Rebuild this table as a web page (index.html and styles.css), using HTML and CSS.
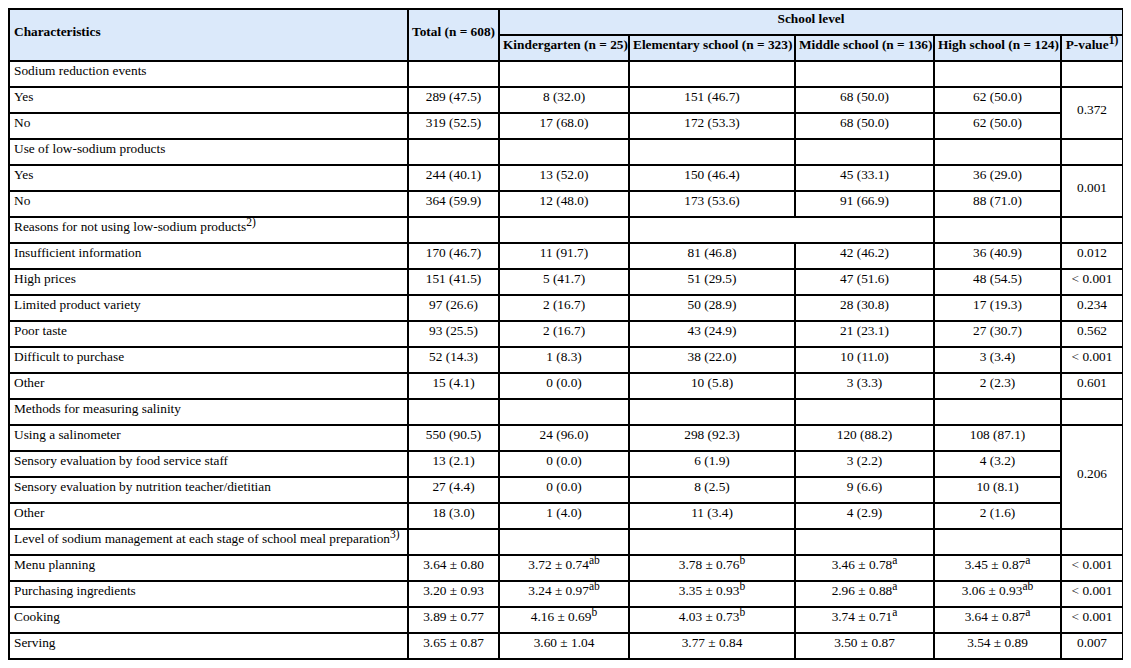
FILE: index.html
```html
<!DOCTYPE html>
<html lang="en">
<head>
<meta charset="utf-8">
<title>Sodium management table</title>
<link rel="stylesheet" href="styles.css">
</head>
<body>
<table class="data">
  <colgroup>
    <col class="c-char">
    <col class="c-total">
    <col class="c-kg">
    <col class="c-el">
    <col class="c-mid">
    <col class="c-high">
    <col class="c-p">
  </colgroup>
  <thead>
    <tr class="hr1">
      <th rowspan="2" class="label">Characteristics</th>
      <th rowspan="2">Total (n = 608)</th>
      <th colspan="6">School level</th>
    </tr>
    <tr class="hr2">
      <th>Kindergarten (n = 25)</th>
      <th>Elementary school (n = 323)</th>
      <th>Middle school (n = 136)</th>
      <th>High school (n = 124)</th>
      <th>P-value<sup>1)</sup></th>
    </tr>
  </thead>
  <tbody>
    <tr><td class="label">Sodium reduction events</td><td></td><td></td><td></td><td></td><td></td><td></td></tr>
    <tr><td class="label">Yes</td><td>289 (47.5)</td><td>8 (32.0)</td><td>151 (46.7)</td><td>68 (50.0)</td><td>62 (50.0)</td><td rowspan="2">0.372</td></tr>
    <tr><td class="label">No</td><td>319 (52.5)</td><td>17 (68.0)</td><td>172 (53.3)</td><td>68 (50.0)</td><td>62 (50.0)</td></tr>
    <tr><td class="label">Use of low-sodium products</td><td></td><td></td><td></td><td></td><td></td><td></td></tr>
    <tr><td class="label">Yes</td><td>244 (40.1)</td><td>13 (52.0)</td><td>150 (46.4)</td><td>45 (33.1)</td><td>36 (29.0)</td><td rowspan="2">0.001</td></tr>
    <tr><td class="label">No</td><td>364 (59.9)</td><td>12 (48.0)</td><td>173 (53.6)</td><td>91 (66.9)</td><td>88 (71.0)</td></tr>
    <tr><td class="label">Reasons for not using low-sodium products<sup>2)</sup></td><td></td><td></td><td colspan="2"></td><td></td><td></td></tr>
    <tr><td class="label">Insufficient information</td><td>170 (46.7)</td><td>11 (91.7)</td><td>81 (46.8)</td><td>42 (46.2)</td><td>36 (40.9)</td><td>0.012</td></tr>
    <tr><td class="label">High prices</td><td>151 (41.5)</td><td>5 (41.7)</td><td>51 (29.5)</td><td>47 (51.6)</td><td>48 (54.5)</td><td>&lt; 0.001</td></tr>
    <tr><td class="label">Limited product variety</td><td>97 (26.6)</td><td>2 (16.7)</td><td>50 (28.9)</td><td>28 (30.8)</td><td>17 (19.3)</td><td>0.234</td></tr>
    <tr><td class="label">Poor taste</td><td>93 (25.5)</td><td>2 (16.7)</td><td>43 (24.9)</td><td>21 (23.1)</td><td>27 (30.7)</td><td>0.562</td></tr>
    <tr><td class="label">Difficult to purchase</td><td>52 (14.3)</td><td>1 (8.3)</td><td>38 (22.0)</td><td>10 (11.0)</td><td>3 (3.4)</td><td>&lt; 0.001</td></tr>
    <tr><td class="label">Other</td><td>15 (4.1)</td><td>0 (0.0)</td><td>10 (5.8)</td><td>3 (3.3)</td><td>2 (2.3)</td><td>0.601</td></tr>
    <tr><td class="label">Methods for measuring salinity</td><td></td><td></td><td></td><td></td><td></td><td></td></tr>
    <tr><td class="label">Using a salinometer</td><td>550 (90.5)</td><td>24 (96.0)</td><td>298 (92.3)</td><td>120 (88.2)</td><td>108 (87.1)</td><td rowspan="4">0.206</td></tr>
    <tr><td class="label">Sensory evaluation by food service staff</td><td>13 (2.1)</td><td>0 (0.0)</td><td>6 (1.9)</td><td>3 (2.2)</td><td>4 (3.2)</td></tr>
    <tr><td class="label">Sensory evaluation by nutrition teacher/dietitian</td><td>27 (4.4)</td><td>0 (0.0)</td><td>8 (2.5)</td><td>9 (6.6)</td><td>10 (8.1)</td></tr>
    <tr><td class="label">Other</td><td>18 (3.0)</td><td>1 (4.0)</td><td>11 (3.4)</td><td>4 (2.9)</td><td>2 (1.6)</td></tr>
    <tr><td class="label">Level of sodium management at each stage of school meal preparation<sup>3)</sup></td><td></td><td></td><td></td><td></td><td></td><td></td></tr>
    <tr><td class="label">Menu planning</td><td>3.64 ± 0.80</td><td>3.72 ± 0.74<sup>ab</sup></td><td>3.78 ± 0.76<sup>b</sup></td><td>3.46 ± 0.78<sup>a</sup></td><td>3.45 ± 0.87<sup>a</sup></td><td>&lt; 0.001</td></tr>
    <tr><td class="label">Purchasing ingredients</td><td>3.20 ± 0.93</td><td>3.24 ± 0.97<sup>ab</sup></td><td>3.35 ± 0.93<sup>b</sup></td><td>2.96 ± 0.88<sup>a</sup></td><td>3.06 ± 0.93<sup>ab</sup></td><td>&lt; 0.001</td></tr>
    <tr><td class="label">Cooking</td><td>3.89 ± 0.77</td><td>4.16 ± 0.69<sup>b</sup></td><td>4.03 ± 0.73<sup>b</sup></td><td>3.74 ± 0.71<sup>a</sup></td><td>3.64 ± 0.87<sup>a</sup></td><td>&lt; 0.001</td></tr>
    <tr><td class="label">Serving</td><td>3.65 ± 0.87</td><td>3.60 ± 1.04</td><td>3.77 ± 0.84</td><td>3.50 ± 0.87</td><td>3.54 ± 0.89</td><td>0.007</td></tr>
  </tbody>
</table>
</body>
</html>
```

FILE: styles.css
```css
body {
  margin: 8px;
  background: #ffffff;
  color: #000000;
  font-family: "Liberation Serif", "Times New Roman", serif;
  font-size: 13.33px;
}

.data {
  border-collapse: collapse;
  table-layout: fixed;
  width: 1114px;
}

.c-char { width: 399px; }
.c-total { width: 91px; }
.c-kg { width: 130px; }
.c-el { width: 166px; }
.c-mid { width: 139px; }
.c-high { width: 127px; }
.c-p { width: 62px; }

.data th,
.data td {
  border: 2px solid #000000;
  padding: 1px 3px 8px;
  line-height: 15px;
  text-align: center;
  vertical-align: middle;
  white-space: nowrap;
  font-weight: normal;
}

.data thead th {
  background: #dbe9fa;
  font-weight: bold;
}

.data .label {
  text-align: left;
  padding-left: 4px;
}

sup {
  font-size: 11.5px;
  line-height: 0;
  vertical-align: 5px;
}
```
